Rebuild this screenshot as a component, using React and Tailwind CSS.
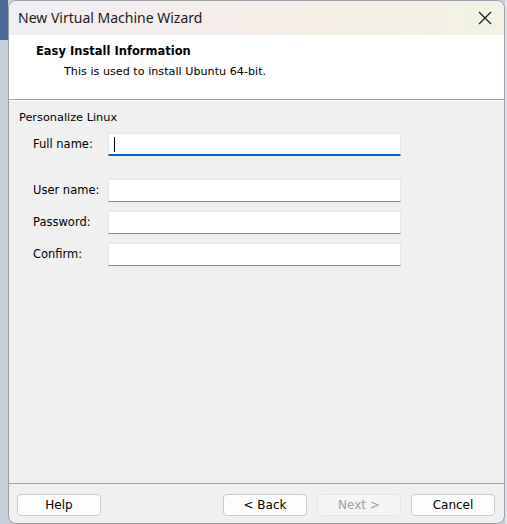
export default function App() {
  const body = { fontFamily: '"DejaVu Sans", Tahoma, sans-serif' };
  const Field = ({ label, active }) => (
    <div className="flex items-center h-[23px]">
      <div className="w-[94px] shrink-0 pl-[19px] text-[11.5px] text-[#000] whitespace-nowrap">{label}</div>
      <div
        className={
          "w-[293px] shrink-0 h-[23px] bg-white border border-[#e6e6e6] flex items-center " +
          (active ? "border-b-2 border-b-[#0067c0]" : "border-b border-b-[#868686]")
        }
      >
        {active && <div className="ml-[5px] w-[1px] h-[15px] bg-black" />}
      </div>
    </div>
  );
  const Btn = ({ children, disabled, w = "w-[84px]" }) => (
    <div
      className={
        w +
        " h-[22px] rounded-[4px] border flex items-center justify-center text-[12px] " +
        (disabled
          ? "bg-[#f5f5f5] border-[#e5e5e5] text-[#9f9f9f]"
          : "bg-[#fdfdfd] border-[#c9c9c9] text-black")
      }
      style={{ fontFamily: '"DejaVu Sans", Tahoma, sans-serif' }}
    >
      {children}
    </div>
  );
  return (
    <div className="w-[507px] h-[524px] flex bg-[#c8d0d9] overflow-hidden">
      <div className="w-[8px] flex flex-col">
        <div className="h-[40px] bg-[#4c6b99]" />
        <div className="flex-1 bg-[#c8d0d9]" />
      </div>
      <div className="w-[497px] h-[524px] flex flex-col bg-[#f0f0f0] border border-[#9aa0a6] rounded-[8px] overflow-hidden">
        <div
          className="h-[34px] flex items-center justify-between pl-[9px] pr-[12px] bg-gradient-to-r from-[#f1eef3] via-[#f6ede8] to-[#f2f3e4]"
        >
          <span
            className="text-[14px] text-[#1a1a1a] pb-[1px]"
            style={{ fontFamily: '"Noto Sans", "Segoe UI", sans-serif' }}
          >
            New Virtual Machine Wizard
          </span>
          <svg width="14" height="14" viewBox="0 0 14 14">
            <path d="M1 1 L13 13 M13 1 L1 13" stroke="#1a1a1a" strokeWidth="1.2" fill="none" />
          </svg>
        </div>
        <div className="h-[64px] bg-white flex flex-col pt-[9px]" style={body}>
          <div className="pl-[27px] text-[11.5px] font-bold text-black leading-[15px]">Easy Install Information</div>
          <div className="pl-[55px] mt-[5px] text-[11.2px] text-black leading-[15px]">
            This is used to install Ubuntu 64-bit.
          </div>
        </div>
        <div className="h-[2px] border-t border-[#a0a0a0] border-b border-b-white" />
        <div className="flex-1 flex flex-col" style={body}>
          <div className="pl-[10px] pt-[9px] text-[11.3px] text-black leading-[15px]">Personalize Linux</div>
          <div className="pl-[5px] mt-[8px]">
            <Field label="Full name:" active />
          </div>
          <div className="pl-[5px] mt-[23px] flex flex-col gap-[9px]">
            <Field label="User name:" />
            <Field label="Password:" />
            <Field label="Confirm:" />
          </div>
          <div className="flex-1" />
          <div className="border-t border-[#a0a0a0] h-[40px] flex items-center px-[8px] pt-[2px]">
            <Btn>Help</Btn>
            <div className="flex-1" />
            <div className="flex gap-[10px] mr-[1px]">
              <Btn>&lt; Back</Btn>
              <Btn disabled>Next &gt;</Btn>
              <Btn>Cancel</Btn>
            </div>
          </div>
        </div>
      </div>
      <div className="flex-1 bg-[#dfe3e8]" />
    </div>
  );
}
